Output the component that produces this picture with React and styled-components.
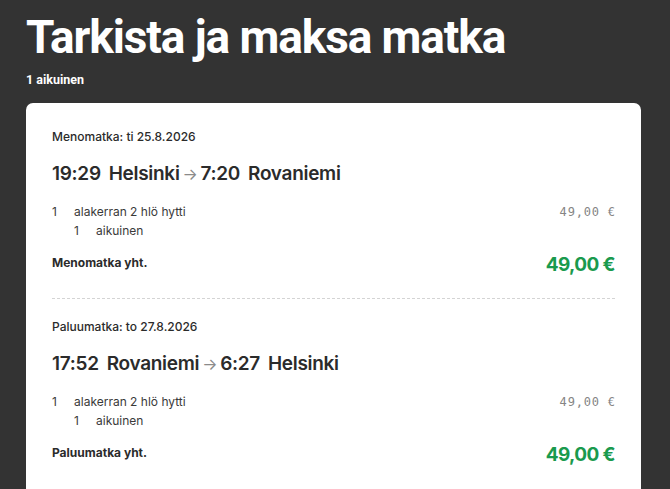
import React from "react";
import styled, { createGlobalStyle } from "styled-components";

const GlobalStyle = createGlobalStyle`
  html, body {
    margin: 0;
    padding: 0;
    background: #333333;
    overflow: hidden;
  }
  body {
    font-family: Inter, Roboto, "Noto Sans", sans-serif;
  }
`;

const Page = styled.div`
  width: 670px;
  height: 489px;
  background: #333333;
  padding: 12px 29px 0 26px;
  box-sizing: border-box;
  overflow: hidden;
`;

const Title = styled.h1`
  margin: 0;
  color: #ffffff;
  font-family: Roboto, sans-serif;
  font-weight: 700;
  font-size: 46px;
  letter-spacing: -1.1px;
  line-height: 50px;
`;

const Travellers = styled.div`
  margin-top: 10px;
  color: #ffffff;
  font-family: Roboto, sans-serif;
  font-weight: 700;
  font-size: 12.5px;
  line-height: 16px;
`;

const Card = styled.div`
  margin-top: 15px;
  background: #ffffff;
  border-radius: 7px;
  padding: 26px 26px 40px 26px;
  color: #2b2b2b;
`;

const Section = styled.section`
  display: flex;
  flex-direction: column;
`;

const DateLabel = styled.div`
  font-size: 12px;
  font-weight: 500;
  line-height: 16px;
  color: #2b2b2b;
`;

const Route = styled.div`
  margin-top: 17px;
  font-size: 19px;
  font-weight: 600;
  line-height: 24px;
  letter-spacing: -0.3px;
  color: #2b2b2b;
  display: flex;
  align-items: baseline;
  gap: 8px;
`;

const Arrow = styled.span`
  color: #8a8a8a;
  font-weight: 400;
  font-size: 16px;
  margin: 0 -5px;
`;

const Item = styled.div`
  display: flex;
  align-items: center;
  margin-top: ${(p) => p.$top}px;
  padding-left: ${(p) => p.$indent}px;
  font-size: 12px;
  line-height: 16px;
  color: #3a3a3a;
`;

const Qty = styled.span`
  width: 22px;
  flex: none;
`;

const ItemName = styled.span`
  flex: 1;
`;

const ItemPrice = styled.span`
  font-family: "DejaVu Sans Mono", "Liberation Mono", monospace;
  font-size: 12px;
  letter-spacing: 0.8px;
  margin-right: -0.8px;
  color: #858585;
`;

const TotalRow = styled.div`
  display: flex;
  justify-content: space-between;
  align-items: flex-start;
  margin-top: 16px;
`;

const TotalLabel = styled.div`
  font-size: 12px;
  font-weight: 700;
  line-height: 16px;
  color: #2b2b2b;
`;

const TotalPrice = styled.div`
  margin-top: -3px;
  font-size: 19px;
  font-weight: 700;
  line-height: 26px;
  letter-spacing: -0.6px;
  color: #1a9a4e;
`;

const Divider = styled.hr`
  margin: 20px 0 20px 0;
  border: none;
  border-top: 1px dashed #d4d4d4;
`;

const legs = [
  {
    label: "Menomatka: ti 25.8.2026",
    dep: "19:29",
    from: "Helsinki",
    arr: "7:20",
    to: "Rovaniemi",
    total: "Menomatka yht.",
  },
  {
    label: "Paluumatka: to 27.8.2026",
    dep: "17:52",
    from: "Rovaniemi",
    arr: "6:27",
    to: "Helsinki",
    total: "Paluumatka yht.",
  },
];

const Leg = ({ leg }) => (
  <Section>
    <DateLabel>{leg.label}</DateLabel>
    <Route>
      <span>{leg.dep}</span>
      <span>{leg.from}</span>
      <Arrow>→</Arrow>
      <span>{leg.arr}</span>
      <span>{leg.to}</span>
    </Route>
    <Item $top={18} $indent={0}>
      <Qty>1</Qty>
      <ItemName>alakerran 2 hlö hytti</ItemName>
      <ItemPrice>49,00 €</ItemPrice>
    </Item>
    <Item $top={3} $indent={22}>
      <Qty>1</Qty>
      <ItemName>aikuinen</ItemName>
    </Item>
    <TotalRow>
      <TotalLabel>{leg.total}</TotalLabel>
      <TotalPrice>49,00 €</TotalPrice>
    </TotalRow>
  </Section>
);

const App = () => {
  return (
    <>
      <GlobalStyle />
      <Page>
        <Title>Tarkista ja maksa matka</Title>
        <Travellers>1 aikuinen</Travellers>
        <Card>
          {legs.map((leg, idx) => (
            <React.Fragment key={`leg-${idx}`}>
              {idx > 0 && <Divider />}
              <Leg leg={leg} />
            </React.Fragment>
          ))}
        </Card>
      </Page>
    </>
  );
};

export default App;
